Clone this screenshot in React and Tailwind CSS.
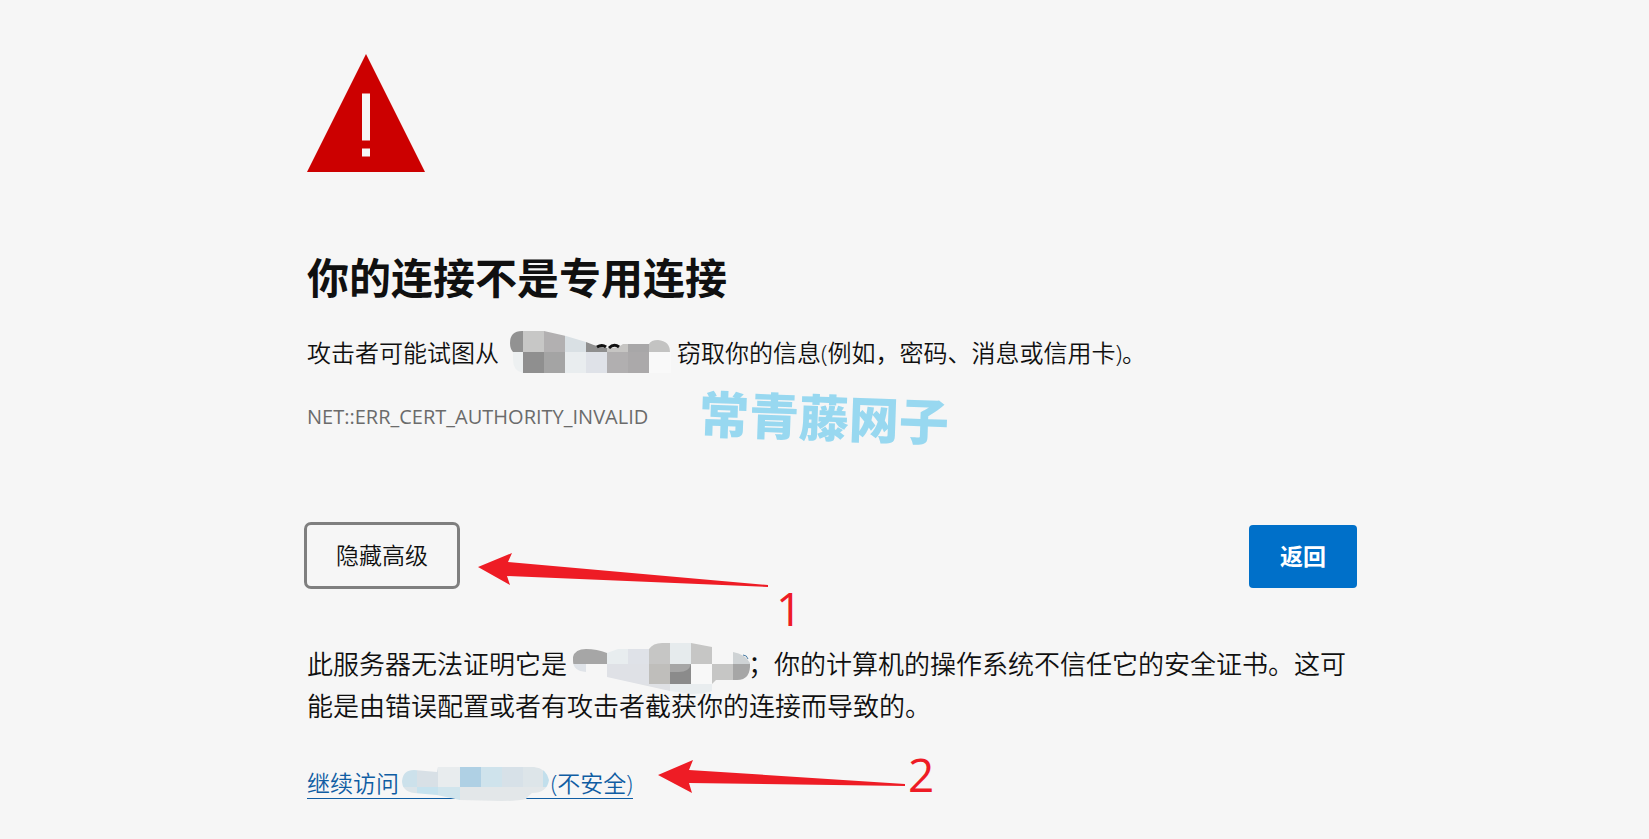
function WarningIcon() {
  return (
    <svg className="block size-[118px]" viewBox="0 0 118 118" aria-hidden="true">
      <path d="M59 0 118 118H0Z" fill="#cc0000" />
      <path d="M55 39.500h8v47h-8zM55 94.500h8v8h-8z" fill="#f6f6f6" />
    </svg>
  );
}

// Each mosaic is a set of tiles clipped to a brush stroke: [x, y, width, height, colour]
function Mosaic({ id, className, viewBox, outline, tiles, children }) {
  return (
    <svg className={className} viewBox={viewBox} aria-hidden="true">
      <clipPath id={id}>
        <path d={outline} />
      </clipPath>
      <g clipPath={`url(#${id})`} shapeRendering="crispEdges">
        {tiles.map(([x, y, width, height, fill]) => (
          <rect key={`${x}-${y}`} x={x} y={y} width={width} height={height} fill={fill} />
        ))}
      </g>
      {children}
    </svg>
  );
}

const hostTiles = [
  [0, 0, 13, 21, '#929292'],
  [13, 0, 21, 21, '#c7c7c6'],
  [34, 0, 21, 21, '#b2b0b1'],
  [55, 0, 21, 21, '#d9e0e4'],
  [76, 0, 21, 21, '#8f8f8f'],
  [97, 0, 21, 21, '#c6c5c3'],
  [118, 0, 21, 21, '#a8a7a8'],
  [139, 0, 22, 21, '#c3c3c2'],
  [0, 21, 13, 21, '#edf0f1'],
  [13, 21, 21, 21, '#8f8f8f'],
  [34, 21, 21, 21, '#a4a4a4'],
  [55, 21, 21, 21, '#e9edef'],
  [76, 21, 21, 21, '#dfe2e8'],
  [97, 21, 21, 21, '#b1afb0'],
  [118, 21, 21, 21, '#aba9aa'],
  [139, 21, 22, 21, '#f9f9f9'],
];

const serverTiles = [
  [0, 0, 34, 21, '#a6a6a6'],
  [34, 0, 21, 21, '#e8edef'],
  [55, 0, 21, 21, '#dfe2e8'],
  [76, 0, 21, 21, '#c6c6c5'],
  [97, 0, 21, 21, '#e6ebed'],
  [118, 0, 21, 21, '#c6c6c5'],
  [139, 0, 21, 21, '#f6f6f6'],
  [160, 0, 18, 21, '#cfd3d5'],
  [0, 21, 34, 20, '#dfe3e8'],
  [34, 21, 42, 20, '#dfe1e6'],
  [76, 21, 21, 20, '#bfbebb'],
  [97, 21, 21, 20, '#8b8b8b'],
  [118, 21, 21, 20, '#f8f8f8'],
  [139, 21, 21, 20, '#c6c6c5'],
  [160, 21, 18, 20, '#a6a6a6'],
  [55, 41, 42, 10, '#dfe1e5'],
  [97, 41, 43, 10, '#e9edef'],
];

const linkTiles = [
  [0, 0, 15, 20, '#cce1eb'],
  [15, 0, 21, 20, '#d8e0e6'],
  [36, 0, 22, 20, '#e8ecee'],
  [58, 0, 21, 20, '#afd0e4'],
  [79, 0, 21, 20, '#cfe3ec'],
  [100, 0, 21, 20, '#d7e1e8'],
  [121, 0, 20, 20, '#dde5e9'],
  [141, 0, 6, 20, '#c2dfec'],
  [0, 20, 15, 14, '#dbe4e9'],
  [15, 20, 21, 14, '#c6e2ee'],
  [36, 20, 22, 14, '#d1e5ed'],
  [58, 20, 89, 14, '#e3e7e9'],
];

export default function App() {
  return (
    <div className="min-h-screen bg-[#f6f6f6] pl-[15px] font-['Open_Sans','Noto_Sans_CJK_SC',sans-serif] text-[#101010]">
      <main lang="zh-CN" className="relative mx-auto max-w-[1050px] pt-[54px] pb-10">
        <WarningIcon />

        <h1 className="mt-[78px] text-[42px] leading-[56px] font-bold">你的连接不是专用连接</h1>

        <p className="mt-[29px] text-[24px] leading-[36px] font-[350]">
          攻击者可能试图从
          <Mosaic
            id="host-mask"
            className="-mt-[9px] mr-[6px] -mb-px ml-[11px] inline-block h-[42px] w-[161px] align-middle"
            viewBox="0 0 161 42"
            outline="M0 12Q0 0 12 0H34L56 5 76 11Q90 17 100 17Q108 17 113 13H139Q141 9 148 9Q160 10 160 21H161V42H13Q3 40 3 29V21Q0 18 0 12Z"
            tiles={hostTiles}
          >
            <path d="M87 16q5-3 9 0M99 17q5-5 10-1" fill="none" stroke="#111" strokeWidth="3" />
          </Mosaic>
          窃取你的信息(例如，密码、消息或信用卡)。
        </p>

        <p className="mt-[30px] text-[20px] leading-[30px] text-[#6b6b6b]">NET::ERR_CERT_AUTHORITY_INVALID</p>

        <div className="mt-[93px] flex items-start justify-between text-[23px]">
          <button
            type="button"
            className="h-[61px] w-[150px] rounded-sm font-[350] outline-3 outline-[#7f7f7f]"
          >
            隐藏高级
          </button>
          <button type="button" className="h-[63px] w-[108px] rounded-sm bg-[#0070c9] font-bold text-white">
            返回
          </button>
        </div>

        <p className="mt-[55px] text-[26px] leading-[42px] font-[350]">
          此服务器无法证明它是
          <Mosaic
            id="server-mask"
            className="-mt-[6px] -mr-[3px] -mb-[9px] ml-[6px] inline-block h-[51px] w-[178px] align-middle"
            viewBox="0 0 178 51"
            outline="M0 14Q2 6 13 6Q24 6 34 10L45 6H76Q80 0 89 0H118L139 4V21H160V9Q172 11 177 20Q178 37 164 37H143L139 41V48Q130 51 118 51L97 48 70 42 34 34V21H13V29Q0 28 0 18Z"
            tiles={serverTiles}
          >
            <path d="M97 21H118Q116 29 106 29H97Z" fill="#a6a6a6" />
            <path d="M170 12q4 0 5 4" fill="none" stroke="#4b7da5" />
          </Mosaic>
          ；你的计算机的操作系统不信任它的安全证书。这可能是由错误配置或者有攻击者截获你的连接而导致的。
        </p>

        <a
          href="#proceed"
          className="mt-[42px] inline-block border-b border-[#0f5da3] pb-px text-[23px] leading-[28px] font-[350] text-[#0f5da3]"
        >
          继续访问
          <Mosaic
            id="link-mask"
            className="relative -mt-[6px] mr-[2px] -mb-[4px] ml-[3px] inline-block h-[34px] w-[147px] align-middle"
            viewBox="0 0 147 34"
            outline="M0 14Q1 3 12 3L35 5 36 0H132Q144 1 147 13Q145 26 130 26Q126 29 124 32Q115 34 100 34L58 33 35 28 12 26Q0 24 0 14Z"
            tiles={linkTiles}
          />
          (不安全)
        </a>

        {/* Site mark */}
        <div className="absolute top-[382px] left-[392px] rotate-2 text-[50px] leading-[72px] font-black text-[#98d8f0]">
          常青藤网子
        </div>

        {/* Step annotations */}
        <div className="absolute top-[553px] left-[171px] flex items-start gap-[7px] text-[46px] leading-[46px] text-[#ee1c25]">
          <svg className="h-[34px] w-[291px]" viewBox="0 0 291 34" aria-hidden="true">
            <path d="M0 14 34 0 30 9 290 32V34L29 23 32 32Z" fill="currentColor" />
          </svg>
          <span className="mt-[32px]">1</span>
        </div>
        <div className="absolute top-[751px] left-[351px] flex items-start gap-[2px] text-[46px] leading-[46px] text-[#ee1c25]">
          <svg className="mt-[9px] h-[34px] w-[248px]" viewBox="0 0 248 34" aria-hidden="true">
            <path d="M0 15 35 0 31 10 247 24V26L31 23 34 33Z" fill="currentColor" />
          </svg>
          <span>2</span>
        </div>
      </main>
    </div>
  );
}
